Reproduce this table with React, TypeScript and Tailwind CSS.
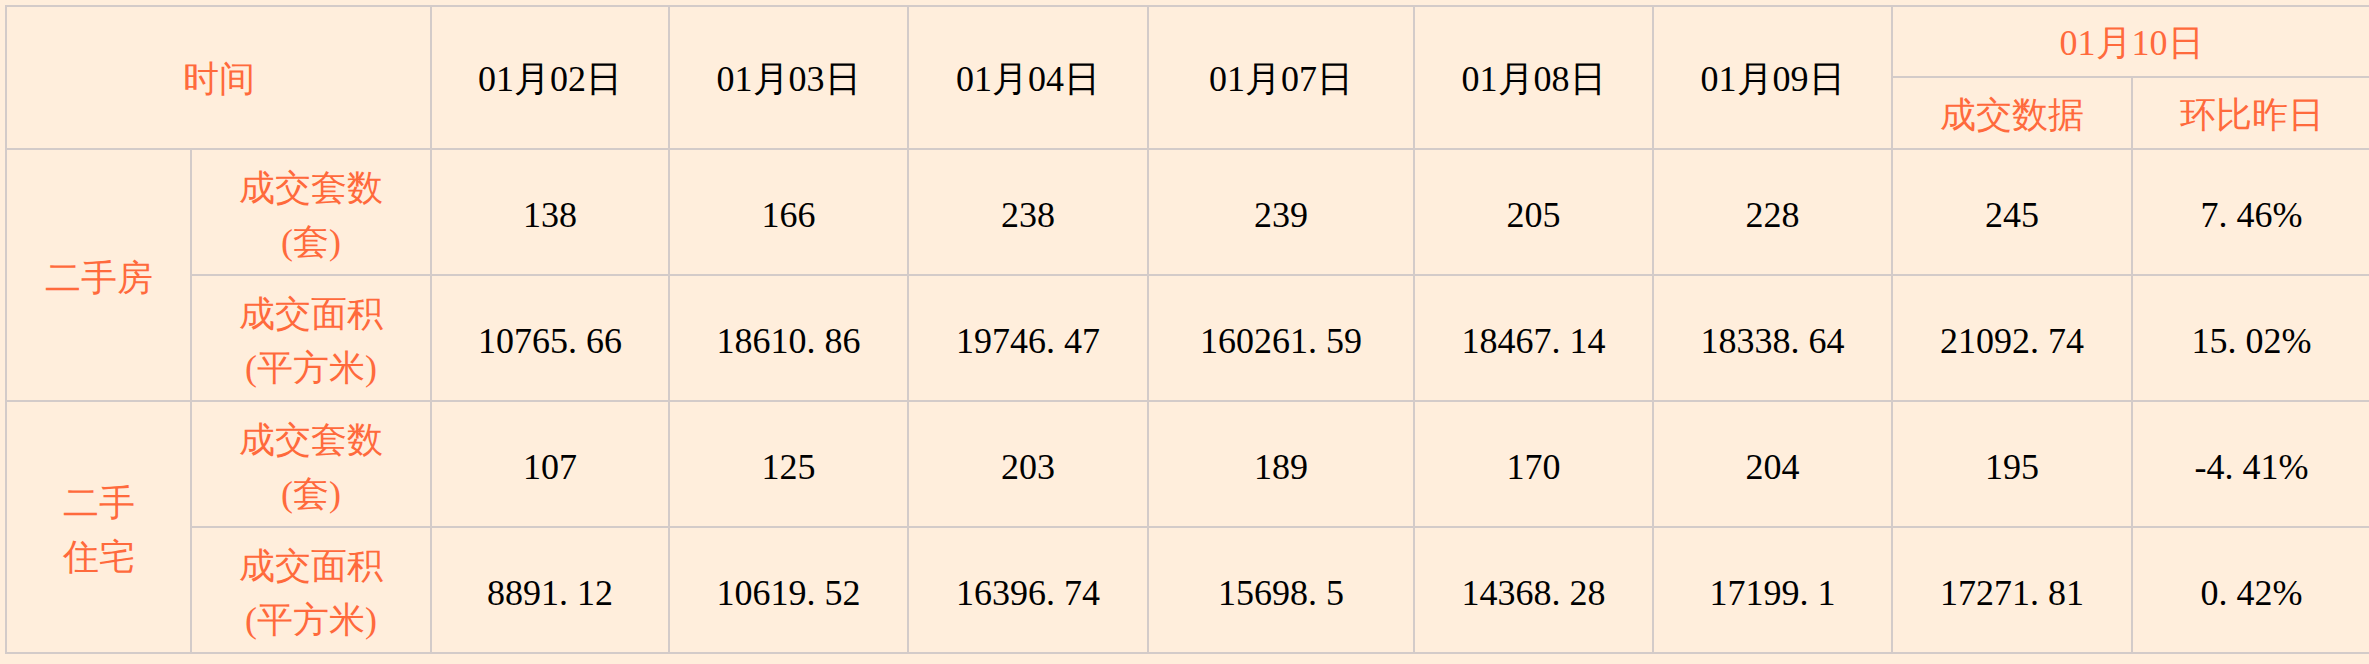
const dates = ["01月02日", "01月03日", "01月04日", "01月07日", "01月08日", "01月09日"];

const groups = [
  {
    name: ["二手房"],
    rows: [
      {
        label: ["成交套数", "(套)"],
        values: ["138", "166", "238", "239", "205", "228"],
        today: "245",
        change: "7.46%",
      },
      {
        label: ["成交面积", "(平方米)"],
        values: ["10765.66", "18610.86", "19746.47", "160261.59", "18467.14", "18338.64"],
        today: "21092.74",
        change: "15.02%",
      },
    ],
  },
  {
    name: ["二手", "住宅"],
    rows: [
      {
        label: ["成交套数", "(套)"],
        values: ["107", "125", "203", "189", "170", "204"],
        today: "195",
        change: "-4.41%",
      },
      {
        label: ["成交面积", "(平方米)"],
        values: ["8891.12", "10619.52", "16396.74", "15698.5", "14368.28", "17199.1"],
        today: "17271.81",
        change: "0.42%",
      },
    ],
  },
];

// the source font gives the full stop a half-em advance
function Num({ v }: { v: string }) {
  const parts = v.split(".");
  if (parts.length < 2) return <>{v}</>;
  return (
    <>
      {parts[0]}
      <span className="inline-block w-[0.5em] text-left">.</span>
      {parts[1]}
    </>
  );
}

function Lines({ lines }: { lines: string[] }) {
  return (
    <>
      {lines.map((l, i) => (
        <div key={i}>{l}</div>
      ))}
    </>
  );
}

const cell =
  "border-2 border-[#d3cbc9] text-center align-middle px-0 pb-0 font-[family-name:Liberation_Serif,Times_New_Roman,serif] font-normal text-[36px] leading-[54px]";
const orange = "text-[#ff6a3c]";

export default function App() {
  return (
    <div className="h-[664px] w-full overflow-hidden bg-[#ffeedc] pl-[5px] pt-[5px] text-black">
      <table className="w-[2365px] table-fixed border-collapse">
        <colgroup>
          <col className="w-[185px]" />
          <col className="w-[240px]" />
          <col className="w-[238px]" />
          <col className="w-[239px]" />
          <col className="w-[240px]" />
          <col className="w-[266px]" />
          <col className="w-[239px]" />
          <col className="w-[239px]" />
          <col className="w-[240px]" />
          <col className="w-[239px]" />
        </colgroup>
        <thead>
          <tr className="h-[71px]">
            <th colSpan={2} rowSpan={2} className={`${cell} ${orange} pt-[3px]`}>
              时间
            </th>
            {dates.map((d) => (
              <th key={d} rowSpan={2} className={`${cell} pt-[3px]`}>
                {d}
              </th>
            ))}
            <th colSpan={2} className={`${cell} ${orange} pt-[3px]`}>
              01月10日
            </th>
          </tr>
          <tr className="h-[72px]">
            <th className={`${cell} ${orange} pt-[3px]`}>成交数据</th>
            <th className={`${cell} ${orange} pt-[3px]`}>环比昨日</th>
          </tr>
        </thead>
        <tbody>
          {groups.map((g) =>
            g.rows.map((r, i) => (
              <tr key={g.name.join("") + i} className="h-[126px]">
                {i === 0 && (
                  <td rowSpan={2} className={`${cell} ${orange} pt-[6px]`}>
                    <Lines lines={g.name} />
                  </td>
                )}
                <td className={`${cell} ${orange} pt-[6px]`}>
                  <Lines lines={r.label} />
                </td>
                {r.values.map((v, j) => (
                  <td key={j} className={`${cell} pt-[6px]`}>
                    <Num v={v} />
                  </td>
                ))}
                <td className={`${cell} pt-[6px]`}>
                  <Num v={r.today} />
                </td>
                <td className={`${cell} pt-[6px]`}>
                  <Num v={r.change} />
                </td>
              </tr>
            ))
          )}
        </tbody>
      </table>
    </div>
  );
}
